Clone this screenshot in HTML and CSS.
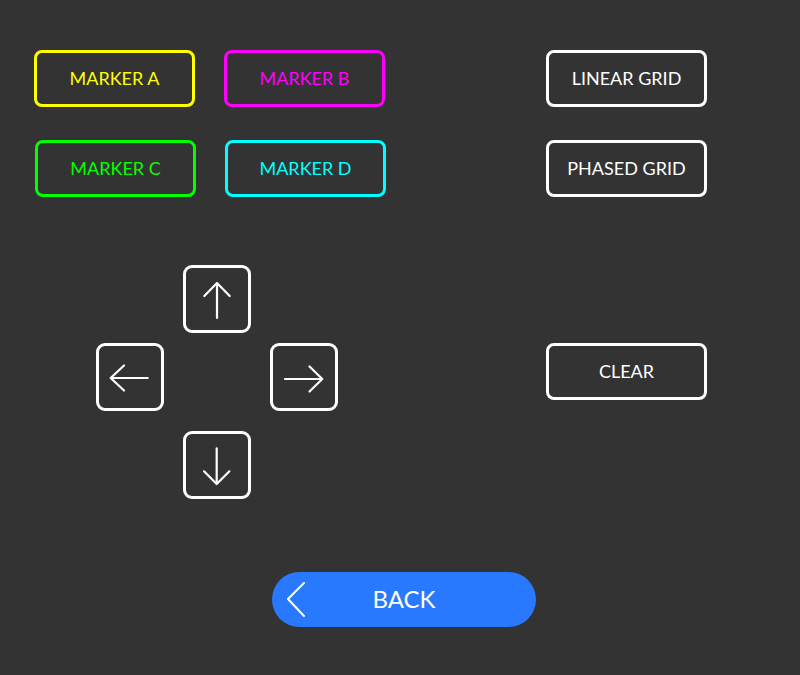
FILE: index.html
```html
<!DOCTYPE html>
<html>
<head>
<meta charset="utf-8">
<link rel="stylesheet" href="styles.css">
</head>
<body>
<div class="page">
  <div class="top">
    <div class="markers">
      <button class="btn marker-a">MARKER A</button>
      <button class="btn marker-b">MARKER B</button>
      <button class="btn marker-c">MARKER C</button>
      <button class="btn marker-d">MARKER D</button>
    </div>
    <div class="grids">
      <button class="btn white">LINEAR GRID</button>
      <button class="btn white">PHASED GRID</button>
    </div>
  </div>
  <div class="middle">
    <div class="dpad">
      <button class="key up"><svg viewBox="0 0 62 62" width="62" height="62"><path d="M31 15 V50 M18.3 28 L31 15 L43.7 28"/></svg></button>
      <button class="key left"><svg viewBox="0 0 62 62" width="62" height="62"><path d="M11.7 32 H48.7 M25 19.5 L11.7 32 L25 44.5"/></svg></button>
      <button class="key right"><svg viewBox="0 0 62 62" width="62" height="62"><path d="M49.3 33 H12 M36.5 20.5 L49.3 33 L36.5 45.5"/></svg></button>
      <button class="key down"><svg viewBox="0 0 62 62" width="62" height="62"><path d="M30.7 14.3 V50 M18 37.3 L30.7 50 L43.4 37.3"/></svg></button>
    </div>
    <button class="btn white clear">CLEAR</button>
  </div>
  <div class="bottom">
    <button class="back">
      <svg class="chev" viewBox="0 0 20 36" width="20" height="36"><path d="M17 1 L1 17 L17 34"/></svg>
      <span>BACK</span>
    </button>
  </div>
</div>
</body>
</html>
```

FILE: styles.css
```css
html, body {
  margin: 0;
  padding: 0;
  background: #333333;
  width: 800px;
  height: 675px;
  overflow: hidden;
  font-family: Lato, "Open Sans", sans-serif;
}

.page {
  display: flex;
  flex-direction: column;
}

button {
  font-family: inherit;
  background: transparent;
  padding: 0;
  margin: 0;
  cursor: pointer;
}

.top {
  display: flex;
  padding: 50px 0 0 34px;
}

.markers {
  display: grid;
  grid-template-columns: 161px 161px;
  column-gap: 29px;
  row-gap: 33px;
}

.grids {
  display: flex;
  flex-direction: column;
  gap: 33px;
  margin-left: 161px;
}

.btn {
  width: 161px;
  height: 57px;
  box-sizing: border-box;
  border: 3px solid #fff;
  border-radius: 8px;
  font-size: 18px;
  color: #fff;
  display: flex;
  align-items: center;
  justify-content: center;
  padding-bottom: 2px;
}

.marker-a { color: #ffff00; border-color: #ffff00; }
.marker-b { color: #ff00ff; border-color: #ff00ff; }
.marker-c { color: #00ff00; border-color: #00ff00; margin-left: 1px; }
.marker-d { color: #00ffff; border-color: #00ffff; margin-left: 1px; }

.middle {
  display: flex;
  align-items: flex-start;
  padding: 68px 0 0 96px;
}

.dpad {
  display: grid;
  grid-template-columns: 68px 68px 68px;
  grid-template-rows: 68px 10px 68px 20px 68px;
  column-gap: 19px;
}

.key {
  width: 68px;
  height: 68px;
  box-sizing: border-box;
  border: 3px solid #fff;
  border-radius: 9px;
  display: flex;
  align-items: center;
  justify-content: center;
}

.key svg {
  display: block;
  flex: none;
}

.key svg path {
  fill: none;
  stroke: #fff;
  stroke-width: 2.2;
  stroke-linecap: round;
  stroke-linejoin: round;
}

.up { grid-column: 2; grid-row: 1; }
.left { grid-column: 1; grid-row: 3; }
.right { grid-column: 3; grid-row: 3; }
.down { grid-column: 2; grid-row: 5; }

.clear {
  margin-left: 208px;
  margin-top: 78px;
}

.bottom {
  display: flex;
  padding: 73px 0 0 272px;
}

.back {
  width: 264px;
  height: 55px;
  border: none;
  border-radius: 28px;
  background: #2979ff;
  color: #fff;
  font-size: 24px;
  display: flex;
  align-items: center;
  justify-content: center;
  position: relative;
  padding-bottom: 2px;
}

.chev {
  position: absolute;
  left: 15px;
  top: 10px;
}

.chev path {
  fill: none;
  stroke: #fff;
  stroke-width: 2;
  stroke-linecap: round;
  stroke-linejoin: miter;
}
```
